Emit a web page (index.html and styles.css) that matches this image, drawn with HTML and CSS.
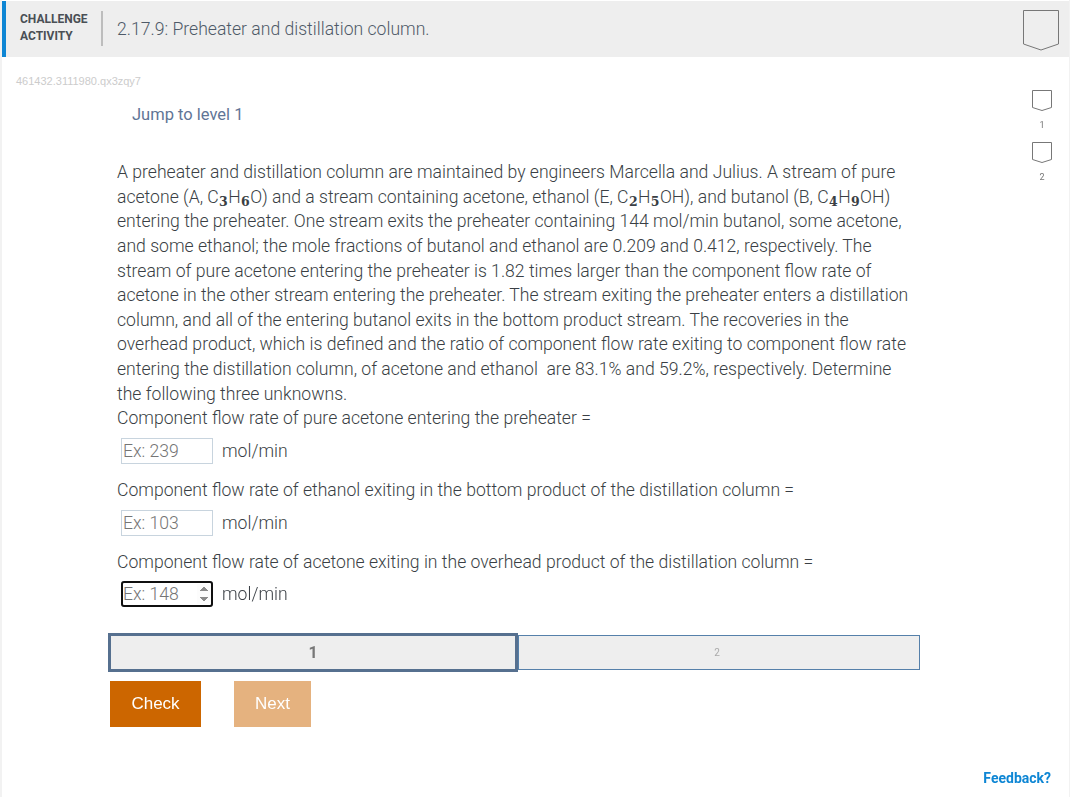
FILE: index.html
```html
<!DOCTYPE html>
<html>
    <head>
        <meta charset="utf-8">
        <title>Challenge activity</title>
        <link rel="stylesheet" href="styles.css">
    </head>
    <body>
        <div class="page">
            <header class="head">
                <div class="tag">CHALLENGE<br>ACTIVITY</div>
                <h1 class="title">2.17.9: Preheater and distillation column.</h1>
                <svg class="shield-big" width="38" height="42" viewBox="0 0 38 42">
                    <path d="M1.5 1.5H36.5V35L19 41L1.5 35Z" fill="none" stroke="#777" stroke-width="1"/>
                </svg>
            </header>
            <div class="body-row">
                <main class="main">
                    <div class="code">461432.3111980.qx3zqy7</div>
                    <div class="jump">Jump to level 1</div>
                    <div class="question">
                        <p class="text">A preheater and distillation column are maintained by engineers Marcella and Julius. A stream of pure acetone (A, C<sub>3</sub>H<sub>6</sub>O) and a stream containing acetone, ethanol (E, C<sub>2</sub>H<sub>5</sub>OH), and butanol (B, C<sub>4</sub>H<sub>9</sub>OH) entering the preheater. One stream exits the preheater containing 144 mol/min butanol, some acetone, and some ethanol; the mole fractions of butanol and ethanol are 0.209 and 0.412, respectively. The stream of pure acetone entering the preheater is 1.82 times larger than the component flow rate of acetone in the other stream entering the preheater. The stream exiting the preheater enters a distillation column, and all of the entering butanol exits in the bottom product stream. The recoveries in the overhead product, which is defined and the ratio of component flow rate exiting to component flow rate entering the distillation column, of acetone and ethanol&nbsp; are 83.1% and 59.2%, respectively. Determine the following three unknowns.</p>
                        <p class="text">Component flow rate of pure acetone entering the preheater =</p>
                        <div class="answer">
                            <input class="box" type="text" placeholder="Ex: 239">
                            <span>mol/min</span>
                        </div>
                        <p class="text">Component flow rate of ethanol exiting in the bottom product of the distillation column =</p>
                        <div class="answer">
                            <input class="box" type="text" placeholder="Ex: 103">
                            <span>mol/min</span>
                        </div>
                        <p class="text">Component flow rate of acetone exiting in the overhead product of the distillation column =</p>
                        <div class="answer">
                            <input class="box box-active" type="number" placeholder="Ex: 148" autofocus>
                            <span>mol/min</span>
                        </div>
                    </div>
                    <div class="levels">
                        <div class="level level-on">1</div>
                        <div class="level">2</div>
                    </div>
                    <div class="buttons">
                        <button class="btn btn-check">Check</button>
                        <button class="btn btn-next">Next</button>
                    </div>
                </main>
                <aside class="side">
                    <svg class="shield" width="22" height="23" viewBox="0 0 22 23">
                        <path d="M1.5 1.5H20.5V18.5L11 21.5L1.5 18.5Z" fill="none" stroke="#777" stroke-width="1"/>
                    </svg>
                    <div class="num">1</div>
                    <svg class="shield" width="22" height="23" viewBox="0 0 22 23">
                        <path d="M1.5 1.5H20.5V18.5L11 21.5L1.5 18.5Z" fill="none" stroke="#777" stroke-width="1"/>
                    </svg>
                    <div class="num">2</div>
                </aside>
            </div>
            <a class="feedback" href="#">Feedback?</a>
        </div>
    </body>
</html>
```

FILE: styles.css
```css
*{
    box-sizing: border-box;
}
html,body{
    margin: 0;
    height: 100%;
    background-color: white;
}
body{
    font-family: Roboto, sans-serif;
    overflow: hidden;
}
.page{
    height: 797px;
    margin: 0 1px 0 2px;
    padding-top: 1px;
    display: flex;
    flex-direction: column;
    box-shadow: 0 0 0 2px #f2f2f2;
}
.head{
    height: 56px;
    background-color: #eeeeee;
    border-left: 4px solid #0e86d4;
    display: flex;
    align-items: center;
    flex: none;
}
.tag{
    width: 97px;
    height: 35px;
    margin-top: -1px;
    padding-left: 14px;
    border-right: 2px solid #bdbdbd;
    font-size: 12px;
    font-weight: 700;
    line-height: 17px;
    color: #4a4f55;
}
.title{
    margin: 0 0 0 14px;
    font-size: 17.6px;
    font-weight: 300;
    color: #4e5a68;
    flex: 1;
}
.shield-big{
    margin-right: 9px;
    margin-top: 1px;
}
.body-row{
    display: flex;
    flex: 1;
}
.main{
    width: 1020px;
}
.code{
    margin: 17px 0 0 14px;
    font-family: "Liberation Sans", Arial, sans-serif;
    font-size: 11px;
    line-height: 14px;
    color: #cccccc;
}
.jump{
    margin: 17px 0 0 130px;
    font-size: 16.5px;
    line-height: 20px;
    color: #5f7596;
}
.question{
    margin: 35px 0 0 115px;
    width: 800px;
    font-size: 17.6px;
    font-weight: 300;
    line-height: 1.4;
    color: #3a3f45;
}
.text{
    margin: 0;
}
.text sub{
    margin: 0 0.4px;
    font-family: "DejaVu Serif", serif;
    font-size: 12.5px;
    font-weight: 700;
    line-height: 0;
    vertical-align: -3px;
}
.answer{
    display: flex;
    align-items: center;
    height: 26px;
    margin: 7px 0 14px 4px;
    gap: 9px;
}
.answer span{
    margin-top: 1px;
}
.box{
    width: 92px;
    height: 26px;
    padding: 0 0 0 1px;
    border: 1px solid #c8d4de;
    font-family: Roboto, sans-serif;
    font-size: 17.6px;
    font-weight: 300;
    color: #333;
}
.box::placeholder{
    color: #757575;
    opacity: 1;
}
.box-active{
    outline: 2px solid #101010;
    outline-offset: -2px;
    border-radius: 3px;
}
.box-active::-webkit-inner-spin-button{
    opacity: 1;
}
.levels{
    display: flex;
    align-items: center;
    margin: 26px 0 0 106px;
    width: 812px;
}
.level{
    flex: 1;
    height: 35px;
    padding-right: 4px;
    background-color: #eeeeee;
    border: 1px solid #5580aa;
    font-size: 10px;
    font-weight: 400;
    line-height: 33px;
    text-align: center;
    color: #aaa;
}
.level-on{
    flex: none;
    width: 410px;
    height: 39px;
    padding-right: 0;
    border: 3px solid #56708f;
    font-size: 16px;
    font-weight: 700;
    color: #777;
}
.buttons{
    display: flex;
    gap: 33px;
    margin: 9px 0 0 108px;
}
.btn{
    height: 46px;
    border: 0;
    font-family: "Liberation Sans", Arial, sans-serif;
    font-size: 17px;
    color: white;
}
.btn-check{
    width: 91px;
    background-color: #cc6600;
}
.btn-next{
    width: 77px;
    background-color: #e5b27f;
}
.side{
    padding: 32px 0 0 9px;
    width: 47px;
    display: flex;
    flex-direction: column;
    align-items: flex-start;
}
.shield{
    display: block;
}
.num{
    width: 22px;
    margin: 7px 0 10px;
    font-size: 9px;
    line-height: 12px;
    text-align: center;
    color: #777;
}
.feedback{
    margin: 0 18px 10px auto;
    font-size: 14px;
    font-weight: 700;
    line-height: 17px;
    color: #0e86d4;
    text-decoration: none;
}
```
